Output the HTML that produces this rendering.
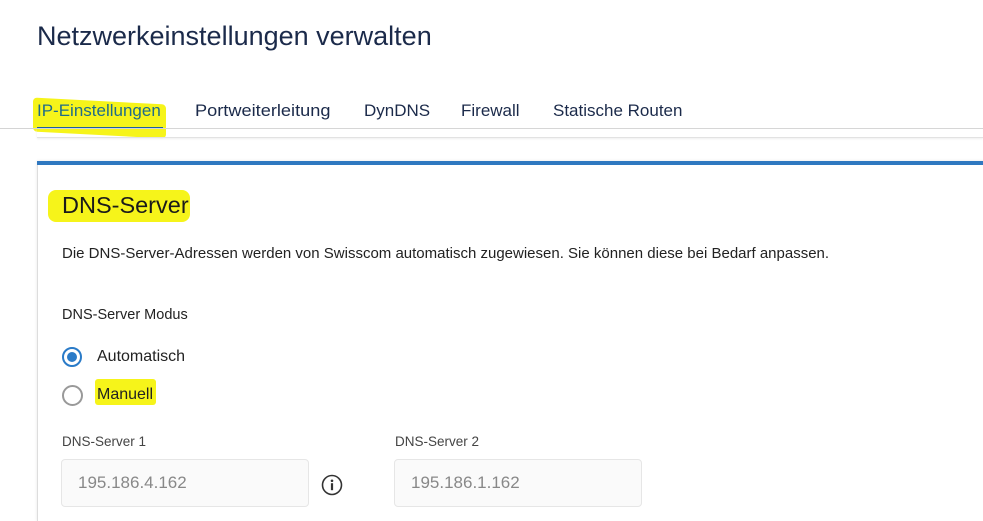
<!DOCTYPE html>
<html><head><meta charset="utf-8"><style>
html,body{margin:0;width:983px;height:521px;overflow:hidden}
body{background:#fff;font-family:"Liberation Sans",sans-serif;position:relative;color:#1a1a1a}
.a{position:absolute;white-space:nowrap}
.hl{position:absolute;background:#f6f41a;border-radius:4px}
</style></head><body>
<div class="a" style="left:37px;top:21px;font-size:27px;color:#1b2a4a">Netzwerkeinstellungen verwalten</div>

<div class="hl" style="left:33px;top:101px;width:133px;height:34px;transform:skewY(3deg)"></div>
<div class="a" style="left:37px;top:101px;font-size:17px;color:#1f6b8a">IP-Einstellungen</div>
<div class="a" style="left:37px;top:127px;width:126px;height:1px;background:#1b5fa0"></div>
<div class="a" style="left:195px;top:101px;font-size:17px;color:#1b2a4a;transform:scaleX(1.07);transform-origin:left">Portweiterleitung</div>
<div class="a" style="left:364px;top:101px;font-size:17px;color:#1b2a4a">DynDNS</div>
<div class="a" style="left:461px;top:101px;font-size:17px;color:#1b2a4a">Firewall</div>
<div class="a" style="left:553px;top:101px;font-size:17px;color:#1b2a4a">Statische Routen</div>
<div class="a" style="left:0;top:128px;width:983px;height:1px;background:#d4d4d4"></div>
<div class="a" style="left:37px;top:129px;width:946px;height:8px;border-bottom:1px solid #e2e2e2;box-shadow:0 1px 2px #eee"></div>

<div class="a" style="left:37px;top:161px;width:946px;height:360px;border-left:1px solid #ddd;box-shadow:0 0 3px #e5e5e5"></div>
<div class="a" style="left:37px;top:161px;width:946px;height:4px;background:#2f78c0"></div>

<div class="hl" style="left:48px;top:190px;width:142px;height:32px;border-radius:8px"></div>
<div class="a" style="left:62px;top:192px;font-size:23.5px;color:#1a1a1a">DNS-Server</div>
<div class="a" style="left:62px;top:245px;font-size:15px;color:#222">Die DNS-Server-Adressen werden von Swisscom automatisch zugewiesen. Sie können diese bei Bedarf anpassen.</div>
<div class="a" style="left:62px;top:307px;font-size:14.5px;color:#222">DNS-Server Modus</div>

<div class="a" style="left:62px;top:347px;width:20px;height:20px;border:2px solid #2a7bc8;border-radius:50%;box-sizing:border-box"></div>
<div class="a" style="left:67px;top:352px;width:10px;height:10px;background:#2a7bc8;border-radius:50%"></div>
<div class="a" style="left:97px;top:348px;font-size:16px;color:#222">Automatisch</div>
<div class="a" style="left:62px;top:385px;width:21px;height:21px;border:2px solid #999;border-radius:50%;box-sizing:border-box"></div>
<div class="hl" style="left:95px;top:379px;width:61px;height:26px;border-radius:3px"></div>
<div class="a" style="left:97px;top:386px;font-size:16px;color:#222">Manuell</div>

<div class="a" style="left:62px;top:434px;font-size:13.5px;color:#444">DNS-Server 1</div>
<div class="a" style="left:61px;top:459px;width:248px;height:48px;border:1px solid #e6e6e6;border-radius:4px;background:#fafafa;box-sizing:border-box"></div>
<div class="a" style="left:78px;top:473px;font-size:17px;color:#888">195.186.4.162</div>
<svg class="a" style="left:321px;top:474px" width="22" height="22" viewBox="0 0 22 22"><circle cx="11" cy="11" r="9.5" fill="none" stroke="#333" stroke-width="1.6"/><circle cx="11" cy="6.8" r="1.3" fill="#333"/><rect x="9.9" y="9.2" width="2.2" height="7" fill="#333"/></svg>
<div class="a" style="left:395px;top:434px;font-size:13.5px;color:#444">DNS-Server 2</div>
<div class="a" style="left:394px;top:459px;width:248px;height:48px;border:1px solid #e6e6e6;border-radius:4px;background:#fafafa;box-sizing:border-box"></div>
<div class="a" style="left:411px;top:473px;font-size:17px;color:#888">195.186.1.162</div>
</body></html>
